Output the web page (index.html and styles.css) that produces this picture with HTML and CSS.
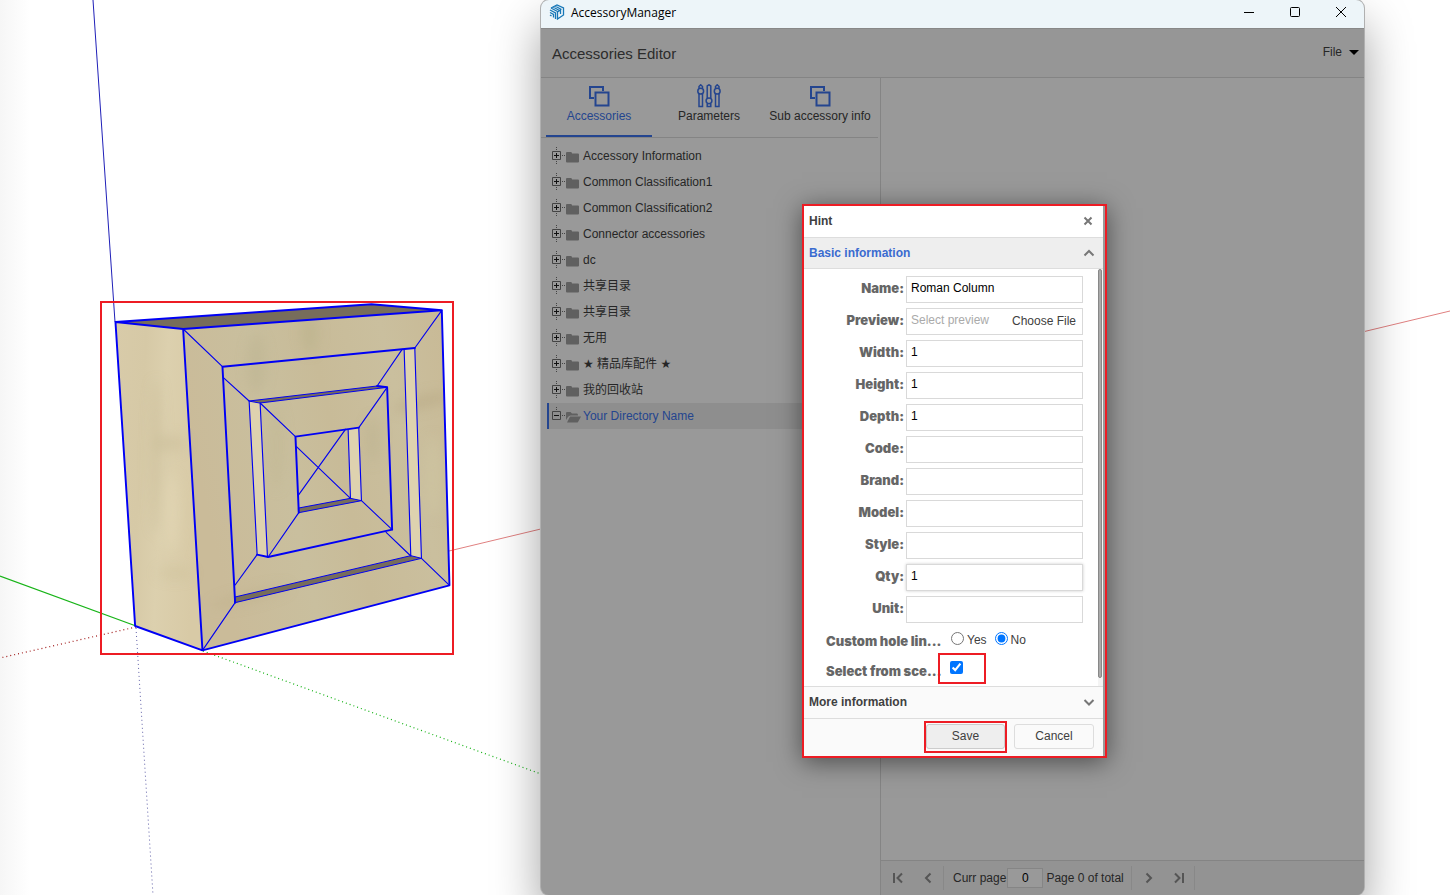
FILE: index.html
```html
<!DOCTYPE html>
<html lang="en">
<head>
<meta charset="utf-8">
<title>AccessoryManager</title>
<link rel="stylesheet" href="styles.css">
</head>
<body>
<svg class="scene" viewBox="0 0 1450 895" preserveAspectRatio="xMinYMin slice" aria-hidden="true">
  <defs>
    <linearGradient id="side" x1="0" x2="1" y1="0" y2="0.2">
      <stop offset="0" stop-color="#d8cba9"/><stop offset=".35" stop-color="#d6c9a6"/><stop offset=".6" stop-color="#dcd0ae"/><stop offset="1" stop-color="#d8caa6"/>
    </linearGradient>
    <linearGradient id="front" x1="0" x2="1" y1="0.3" y2="0">
      <stop offset="0" stop-color="#cabb99"/><stop offset=".3" stop-color="#c9bf9e"/><stop offset=".5" stop-color="#c8bb98"/><stop offset=".75" stop-color="#cabf9e"/><stop offset="1" stop-color="#c8b995"/>
    </linearGradient>
    <linearGradient id="edge"><stop offset="0" stop-color="#f6f6f6"/><stop offset="1" stop-color="#fff"/></linearGradient>
    <filter id="soft" x="-50%" y="-50%" width="200%" height="200%"><feGaussianBlur stdDeviation="18"/></filter>
    <clipPath id="block"><path d="M77 96L280 117L1056 61L1079 886L338 1081L136 1008Z"/></clipPath>
  </defs>
  <rect width="30" height="895" fill="url(#edge)"/>
  <g fill="none" stroke-width="1">
    <path d="M93 0L115 322" stroke="#2020b8"/>
    <path d="M449 551L1450 311" stroke="#e08080"/>
    <path d="M0 576L136 626" stroke="#18b418" stroke-width="1.3"/>
    <path d="M136 627L0 658" stroke="#a01818" stroke-width="1.2" stroke-dasharray="1 3"/>
    <path d="M136 628L153 895" stroke="#6060a8" stroke-dasharray="1 3"/>
    <path d="M203 651L541 774" stroke="#10b010" stroke-width="1.2" stroke-dasharray="1 3"/>
  </g>
  <g transform="translate(89.800 290) scale(.33333)" stroke-linejoin="round" stroke-linecap="round">
    <path d="M77 96L280 117L338 1081L136 1008Z" fill="url(#side)"/>
    <path d="M280 117L1056 61L1079 886L338 1081Z" fill="url(#front)"/>
    <g clip-path="url(#block)" filter="url(#soft)">
      <ellipse cx="200" cy="500" rx="18" ry="230" fill="#c6b993" opacity=".4"/>
      <ellipse cx="240" cy="460" rx="50" ry="24" fill="#c6b993" opacity=".4"/>
      <ellipse cx="255" cy="850" rx="55" ry="18" fill="#c6b993" opacity=".3"/>
      <ellipse cx="245" cy="670" rx="24" ry="120" fill="#e5dab8" opacity=".5"/>
      <ellipse cx="660" cy="130" rx="26" ry="60" fill="#b5ae88" opacity=".4"/>
      <ellipse cx="500" cy="220" rx="28" ry="90" fill="#b9b08b" opacity=".4"/>
      <ellipse cx="1000" cy="335" rx="90" ry="18" fill="#b5a682" opacity=".5" transform="rotate(-14 1000 335)"/>
      <ellipse cx="850" cy="450" rx="22" ry="70" fill="#b9b08b" opacity=".4"/>
      <ellipse cx="560" cy="470" rx="20" ry="130" fill="#bdb38f" opacity=".4"/>
      <ellipse cx="1030" cy="560" rx="30" ry="120" fill="#cec4a2" opacity=".6"/>
      <ellipse cx="480" cy="920" rx="120" ry="16" fill="#beb08b" opacity=".5" transform="rotate(-14 480 920)"/>
    </g>
    <path d="M77 96L845 43L1056 61L280 117Z" fill="#776d5b"/>
    <g fill="#ded2af">
      <path d="M943 178L975 174L995 805L963 798Z"/>
      <path d="M478 333L511 339L533 801L502 794Z"/>
      <path d="M775 420L807 413L815 632L782 625Z"/>
    </g>
    <g fill="#776d5b" stroke="#0000f0" stroke-width="3">
      <path d="M436 921L963 797L995 805L436 938Z"/>
      <path d="M478 333L862 288L892 292L511 339Z"/>
      <path d="M627 654L782 625L815 632L627 668Z"/>
    </g>
    <path fill="none" stroke="#0000f0" stroke-width="3.4" d="M280 117L398 230M1056 61L975 174L995 805L1079 886M338 1081L436 938M943 178L963 798M400 262L478 333L502 794L436 885M511 339L533 801M937 178L862 288M889 727L963 798M511 339L617 440M892 292L807 413L815 632L907 719M535 801L627 668M775 420L782 625L620 470M767 418L627 614"/>
    <path fill="none" stroke="#0000f5" stroke-width="5.8" d="M77 96L280 117L338 1081L136 1008ZM77 96L845 43L1056 61L280 117M1056 61L1079 886L338 1081M975 174L398 230L436 938M862 288L892 292L907 719L535 801L502 794M807 413L617 440L627 668"/>
  </g>
  <rect x="101" y="302" width="352" height="352" fill="none" stroke="#ed1c24" stroke-width="2"/>
</svg>

<main class="window">
  <header class="titlebar">
    <svg class="logo" viewBox="0 0 16 16" fill="none" stroke="#1777b7" stroke-width="1.3">
      <path d="M2 4L8 1L14.500 4V11L8.500 15V8L11.500 6V10M2 4L8.500 7.500M4 3L10.500 6.500M6 2L12.500 5.500M1 6L6.500 9V15M1 8.500L4.500 10.500V13.500M1 11L2.500 12"/>
    </svg>
    <h1 class="title">AccessoryManager</h1>
    <button class="winbtn" aria-label="Minimize"><svg viewBox="0 0 12 12"><path d="M1 6.500H11"/></svg></button>
    <button class="winbtn" aria-label="Maximize"><svg viewBox="0 0 12 12"><rect x="1.500" y="1.500" width="9" height="9" rx="1"/></svg></button>
    <button class="winbtn" aria-label="Close"><svg viewBox="0 0 12 12"><path d="M1 1L11 11M11 1L1 11"/></svg></button>
  </header>
  <div class="appbar">
    <h2 class="apptitle">Accessories Editor</h2>
    <button class="filemenu">File <span class="caret"></span></button>
  </div>
  <div class="workspace">
    <aside class="sidebar">
      <nav class="tabs">
        <button class="tab active">
          <svg width="24" height="24" viewBox="0 0 24 24"><path d="M7 14H3V3H16V7M8.500 8.500H21.500V21.500H8.500Z"/></svg>
          Accessories
        </button>
        <button class="tab">
          <svg class="sliders" width="24" height="24" viewBox="0 0 24 24"><path d="M2 10V22.500H5.500V10M2 4.500V2.500L3.700.800L5.500 2.500V4.500M10.200 14V2L12 .800L13.800 2V14M10.200 20V22.500H13.800V20M18.500 10V22.500H22V10M18.500 4.500V2.500L20.200.800L22 2.500V4.500"/><circle cx="3.700" cy="7.200" r="2.900"/><circle cx="12" cy="16.800" r="2.900"/><circle cx="20.200" cy="7.200" r="2.900"/></svg>
          Parameters
        </button>
        <button class="tab">
          <svg width="24" height="24" viewBox="0 0 24 24"><path d="M7 14H3V3H16V7M8.500 8.500H21.500V21.500H8.500Z"/></svg>
          Sub accessory info
        </button>
      </nav>
      <svg class="defs" width="0" height="0">
        <symbol id="plus" viewBox="0 0 14 18"><path d="M4.500 0V4M4.500 14V18M10 8.500H14" stroke="#444" stroke-dasharray="1 1"/><path d="M.5 4.500H8.500V12.500H.5Z" stroke="#444"/><path d="M2 8.500H7M4.500 6V11" stroke="#111"/></symbol>
        <symbol id="minus" viewBox="0 0 14 18"><path d="M4.500 0V4M10 8.500H14" stroke="#444" stroke-dasharray="1 1"/><path d="M.5 4.500H8.500V12.500H.5Z" stroke="#444"/><path d="M2 8.500H7" stroke="#111"/></symbol>
        <symbol id="folder" viewBox="0 0 15 12"><path d="M0 2Q0 1 1 1H5Q6 1 6 2.500H12Q13 2.500 13 3.500V10.500Q13 11.500 12 11.500H1Q0 11.500 0 10.500Z" fill="#606060"/></symbol>
        <symbol id="open" viewBox="0 0 15 12"><path d="M0 9V2Q0 1 1 1H4.500L6 2.500H11Q12 2.500 12 4.500H4.500Q3 4.500 2 6ZM4 5.500H15L12 11Q11.500 11.500 11 11.500H1Z" fill="#606060"/></symbol>
      </svg>
      <ul class="tree">
        <li><svg class="knob"><use href="#plus"/></svg><svg class="dir"><use href="#folder"/></svg><span>Accessory Information</span></li>
        <li><svg class="knob"><use href="#plus"/></svg><svg class="dir"><use href="#folder"/></svg><span>Common Classification1</span></li>
        <li><svg class="knob"><use href="#plus"/></svg><svg class="dir"><use href="#folder"/></svg><span>Common Classification2</span></li>
        <li><svg class="knob"><use href="#plus"/></svg><svg class="dir"><use href="#folder"/></svg><span>Connector accessories</span></li>
        <li><svg class="knob"><use href="#plus"/></svg><svg class="dir"><use href="#folder"/></svg><span>dc</span></li>
        <li><svg class="knob"><use href="#plus"/></svg><svg class="dir"><use href="#folder"/></svg><span>共享目录</span></li>
        <li><svg class="knob"><use href="#plus"/></svg><svg class="dir"><use href="#folder"/></svg><span>共享目录</span></li>
        <li><svg class="knob"><use href="#plus"/></svg><svg class="dir"><use href="#folder"/></svg><span>无用</span></li>
        <li><svg class="knob"><use href="#plus"/></svg><svg class="dir"><use href="#folder"/></svg><span>★ 精品库配件 ★</span></li>
        <li><svg class="knob"><use href="#plus"/></svg><svg class="dir"><use href="#folder"/></svg><span>我的回收站</span></li>
        <li class="selected"><svg class="knob"><use href="#minus"/></svg><svg class="dir"><use href="#open"/></svg><span>Your Directory Name</span></li>
      </ul>
    </aside>
    <section class="content">
      <div class="pager">
        <button class="page" aria-label="First page"><svg viewBox="0 0 12 12"><path d="M2 1V11M10 1.500L5.500 6L10 10.500"/></svg></button>
        <button class="page" aria-label="Previous page"><svg viewBox="0 0 12 12"><path d="M8.500 1.500L4 6L8.500 10.500"/></svg></button>
        <span class="sep"></span>
        <label for="curr">Curr page</label>
        <input class="curr" id="curr" value="0">
        <span class="total">Page 0 of total</span>
        <span class="sep"></span>
        <button class="page" aria-label="Next page"><svg viewBox="0 0 12 12"><path d="M3.500 1.500L8 6L3.500 10.500"/></svg></button>
        <button class="page" aria-label="Last page"><svg viewBox="0 0 12 12"><path d="M2 1.500L6.500 6L2 10.500M10 1V11"/></svg></button>
        <span class="sep"></span>
      </div>
    </section>
  </div>
</main>

<form class="dialog" aria-label="Hint">
  <header class="dialoghead"><h3>Hint</h3><button type="button" class="plain" aria-label="Close"><svg viewBox="0 0 12 12"><path d="M2.500 2.500L9.500 9.500M9.500 2.500L2.500 9.500"/></svg></button></header>
  <button type="button" class="panelhead open">Basic information<svg viewBox="0 0 12 12"><path d="M1.500 8.500L6 4L10.500 8.500"/></svg></button>
  <div class="panel">
    <div class="fields">
      <div class="row"><label for="name">Name:</label><input id="name" value="Roman Column"></div>
      <div class="row"><label for="preview">Preview:</label><div class="filebox"><input id="preview" placeholder="Select preview"><button type="button">Choose File</button></div></div>
      <div class="row"><label for="width">Width:</label><input id="width" value="1"></div>
      <div class="row"><label for="height">Height:</label><input id="height" value="1"></div>
      <div class="row"><label for="depth">Depth:</label><input id="depth" value="1"></div>
      <div class="row"><label for="code">Code:</label><input id="code"></div>
      <div class="row"><label for="brand">Brand:</label><input id="brand"></div>
      <div class="row"><label for="model">Model:</label><input id="model"></div>
      <div class="row"><label for="style">Style:</label><input id="style"></div>
      <div class="row"><label for="qty">Qty:</label><input class="hot" id="qty" value="1"></div>
      <div class="row"><label for="unit">Unit:</label><input id="unit"></div>
      <div class="choice" role="radiogroup" aria-label="Custom hole link"><span class="choicelabel">Custom hole lin...</span><label class="option"><input type="radio" name="hole">Yes</label><label class="option"><input type="radio" name="hole" checked>No</label></div>
      <div class="choice"><label class="choicelabel" for="scene">Select from sce...</label><span class="checkmark"><input type="checkbox" id="scene" checked></span></div>
    </div>
    <div class="scroll"><div class="thumb"></div></div>
  </div>
  <button type="button" class="panelhead">More information<svg viewBox="0 0 12 12"><path d="M1.500 4L6 8.500L10.500 4"/></svg></button>
  <footer class="actions"><span class="savemark"><button type="button" class="btn save">Save</button></span><button type="button" class="btn">Cancel</button></footer>
</form>
</body>
</html>
```
FILE: styles.css
```css
* { box-sizing: border-box; }
body {
  margin: 0;
  height: 100vh;
  overflow: hidden;
  background: #fff;
  color: #262626;
  font: 12px/16px "Liberation Sans", Arial, "DejaVu Sans", "Noto Sans CJK SC", sans-serif;
}
button, input { font: inherit; color: inherit; margin: 0; }
button { padding: 0; border: 0; background: none; }
h1, h2, h3 { margin: 0; font-weight: 400; }
svg { display: block; fill: none; flex: none; }

.scene { position: absolute; inset: 0; width: 100%; height: 100%; }

.window {
  position: absolute;
  inset: 0 86px 0 541px;
  display: flex;
  flex-direction: column;
  border-radius: 8px;
  overflow: hidden;
  background: #999;
  box-shadow: 0 0 0 1px #b0b0b0, 0 24px 48px rgba(0, 0, 0, .38);
}
.titlebar {
  display: flex;
  align-items: center;
  height: 29px;
  padding: 0 0 4px 8px;
  background: #edf5f9;
  border-bottom: 1px solid #888;
  color: #000;
}
.logo { width: 16px; height: 16px; }
.title { flex: 1; padding: 2px 0 0 6px; font: 12px/16px "Open Sans", sans-serif; }
.winbtn { width: 46px; height: 24px; display: grid; place-items: center; }
.winbtn svg { width: 12px; height: 12px; stroke: #000; }

.appbar {
  display: flex;
  align-items: center;
  justify-content: space-between;
  height: 49px;
  padding: 2px 5px 0 11px;
  background: #969696;
  border-bottom: 1px solid #848484;
}
.apptitle { font-size: 15px; line-height: 20px; color: #2c2c2c; }
.filemenu { display: flex; align-items: center; gap: 7px; padding-bottom: 4px; }
.caret { border: 5px solid transparent; border-top-color: #000; border-bottom: 0; }

.workspace { flex: 1; display: flex; min-height: 0; }
.sidebar { width: 340px; border-right: 1px solid #848484; }
.tabs {
  display: flex;
  height: 60px;
  margin: 0 2px 0 0;
  padding: 0 4px 0 5px;
  border-bottom: 1px solid #848484;
}
.tab {
  display: flex;
  flex-direction: column;
  align-items: center;
  flex: 1 1 106px;
  padding-top: 6px;
  white-space: nowrap;
}
.tab.active { flex: 0 0 106px; }
.tab:nth-child(2) { flex: 0 0 114px; }
.tab svg { stroke: #24458f; stroke-width: 2; }
.tab .sliders { stroke-width: 1.5; }
.tab.active { color: #24458f; border-bottom: 2px solid #24458f; }

.defs { position: absolute; }
.tree { margin: 0; padding: 5px 0 0 5px; list-style: none; }
.tree li { display: flex; align-items: center; height: 26px; padding-left: 6px; }
.tree li span { padding-left: 2px; }
.knob { width: 14px; height: 18px; }
.dir { width: 15px; height: 12px; margin-top: 1px; }
.tree .selected { margin-left: 1px; padding-left: 3px; border-left: 2px solid #24458f; background: #8e8e8e; color: #24458f; }

.content { flex: 1; display: flex; flex-direction: column; justify-content: flex-end; }
.pager {
  display: flex;
  align-items: center;
  height: 35px;
  padding-left: 2px;
  background: #939393;
  border-top: 1px solid #848484;
}
.page { width: 30px; height: 30px; display: grid; place-items: center; }
.page svg { width: 12px; height: 12px; stroke: #555; stroke-width: 2; }
.sep { width: 1px; height: 24px; background: #888; margin-right: 2px; }
.pager label { margin-left: 7px; }
.curr { width: 36px; height: 20px; margin: 0 3px 0 1px; padding: 0; border: 1px solid #858585; background: #999; color: #000; text-align: center; }
.total { margin-right: 7px; }

.dialog {
  position: absolute;
  top: 204px;
  left: 802px;
  width: 305px;
  border: 2px solid #ed1c24;
  background: linear-gradient(to left, #999 2px, #fff 2px);
  padding-right: 2px;
  box-shadow: 0 4px 24px rgba(0, 0, 0, .5);
  color: #404040;
}
.dialoghead { display: flex; align-items: center; justify-content: space-between; height: 32px; padding: 0 9px 2px 5px; border-bottom: 1px solid #ddd; }
.dialoghead h3 { font-size: 12px; font-weight: 700; }
.dialog svg { width: 12px; height: 12px; stroke: #777; stroke-width: 2; }
.panelhead {
  display: flex;
  align-items: center;
  justify-content: space-between;
  width: 100%;
  height: 32px;
  padding: 0 8px 2px 5px;
  border-bottom: 1px solid #ddd;
  background: #fafafa;
  font-weight: 700;
}
.panelhead.open { height: 31px; padding-bottom: 0; background: #eee; color: #3a6bd0; }
.panel { display: flex; border-bottom: 1px solid #ddd; }
.fields { flex: 1; display: flex; flex-direction: column; gap: 5px; padding: 7px 15px 3px 22px; }
.row { display: flex; gap: 2px; height: 27px; }
.row label, .choicelabel { font: 900 13px/24px Inter, sans-serif; color: #666; white-space: nowrap; }
.row label { flex: 1; text-align: right; }
.row > input, .filebox { width: 177px; height: 27px; border: 1px solid #d9d9d9; background: #fff; }
.row input { padding: 0 4px 3px; color: #000; }
.row .hot { box-shadow: 0 0 3px #ccc; }
.filebox { display: flex; align-items: center; justify-content: space-between; padding-right: 6px; }
.filebox input { width: 94px; border: 0; padding: 0 4px 3px; outline: 0; background: none; }
.filebox button { padding-bottom: 1px; }
.filebox input::placeholder { color: #aaa; opacity: 1; }
.choice { display: flex; align-items: center; height: 25px; }
.choicelabel { width: 112px; }
.option { display: flex; align-items: center; gap: 3px; margin-left: 13px; padding-bottom: 2px; }
.option + .option { margin-left: 8px; }
.option input, .checkmark input { width: 13px; height: 13px; accent-color: #0075ff; }
.option input { margin-bottom: 3px; }
.checkmark { display: flex; width: 48px; height: 31px; padding: 6px 10px; margin-top: -5px; border: 2px solid #ed1c24; }
.scroll { width: 5px; background: #f4f4f4; }
.thumb { width: 4px; height: 98%; border-radius: 2px; background: #aaa; border: 1px solid #888; }
.actions { display: flex; justify-content: flex-end; gap: 7px; height: 37px; padding: 2px 9px 3px; background: #fafafa; }
.savemark { width: 83px; height: 32px; border: 2px solid #ed1c24; padding: 1px 0; }
.btn { width: 80px; height: 25px; padding-bottom: 1px; border: 1px solid #ddd; border-radius: 3px; }
.actions > .btn { margin-top: 3px; }
.save { width: 100%; height: 25px; background: #eee; border-color: #ccc; }
```
